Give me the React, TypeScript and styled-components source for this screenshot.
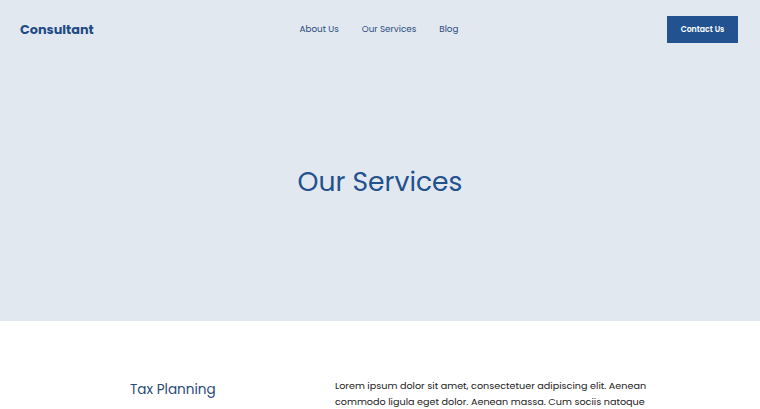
import React from 'react';
import styled, { createGlobalStyle } from 'styled-components';

const GlobalStyle = createGlobalStyle`
  html, body {
    margin: 0;
    padding: 0;
    background: #ffffff;
  }
  body {
    font-family: "Poppins", "Inter", "Noto Sans", sans-serif;
    -webkit-font-smoothing: antialiased;
  }
  * {
    box-sizing: border-box;
  }
`;

const Hero = styled.section`
  display: flex;
  flex-direction: column;
  height: 321px;
  background: #e2e8f0;
`;

const Header = styled.header`
  display: grid;
  grid-template-columns: 1fr auto 1fr;
  align-items: center;
  height: 57px;
  padding: 0 22px 0 20px;
`;

const Logo = styled.a`
  justify-self: start;
  margin-top: 2px;
  font-size: 12.8px;
  font-weight: 700;
  color: #1f4b85;
  text-decoration: none;
`;

const Nav = styled.nav`
  display: flex;
  gap: 23px;
  margin-top: 2px;
`;

const NavLink = styled.a`
  font-size: 8.8px;
  color: #2c4d7c;
  text-decoration: none;
`;

const ContactButton = styled.button`
  justify-self: end;
  width: 71px;
  height: 27px;
  margin-top: 2px;
  border: none;
  background: #22528f;
  color: #ffffff;
  font-family: inherit;
  font-size: 7.8px;
  font-weight: 600;
  cursor: pointer;
`;

const TitleArea = styled.div`
  flex: 1;
  display: flex;
  align-items: center;
  justify-content: center;
  padding-bottom: 14px;
`;

const Title = styled.h1`
  margin: 0;
  font-size: 26.6px;
  font-weight: 400;
  color: #22518e;
`;

const Services = styled.section`
  padding: 57px 95px 0 130px;
`;

const ServiceRow = styled.div`
  display: grid;
  grid-template-columns: 205px 1fr;
  align-items: start;
`;

const ServiceName = styled.h2`
  margin: 0;
  font-size: 13.6px;
  font-weight: 400;
  line-height: 24px;
  color: #2a4a78;
`;

const ServiceText = styled.p`
  margin: 0;
  font-size: 9.65px;
  line-height: 16px;
  color: #222222;
`;

export default function App() {
  return (
    <>
      <GlobalStyle />
      <Hero>
        <Header>
          <Logo href="#">Consultant</Logo>
          <Nav>
            <NavLink href="#">About Us</NavLink>
            <NavLink href="#">Our Services</NavLink>
            <NavLink href="#">Blog</NavLink>
          </Nav>
          <ContactButton>Contact Us</ContactButton>
        </Header>
        <TitleArea>
          <Title>Our Services</Title>
        </TitleArea>
      </Hero>
      <Services>
        <ServiceRow>
          <ServiceName>Tax Planning</ServiceName>
          <ServiceText>
            Lorem ipsum dolor sit amet, consectetuer adipiscing elit. Aenean commodo ligula eget
            dolor. Aenean massa. Cum sociis natoque penatibus et magnis dis parturient montes,
            nascetur ridiculus mus.
          </ServiceText>
        </ServiceRow>
      </Services>
    </>
  );
}
